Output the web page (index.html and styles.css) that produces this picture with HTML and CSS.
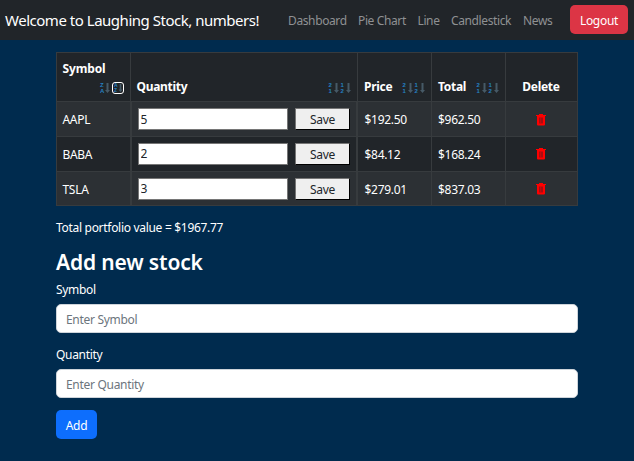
FILE: index.html
```html
<!DOCTYPE html>
<html lang="en">
<head>
<meta charset="utf-8">
<title>Laughing Stock</title>
<link rel="stylesheet" href="styles.css">
</head>
<body>
<header class="navbar">
  <span class="brand">Welcome to Laughing Stock, numbers!</span>
  <nav class="links"><a class="l1">Dashboard</a><a class="l2">Pie Chart</a><a class="l3">Line</a><a class="l4">Candlestick</a><a class="l5">News</a></nav>
  <button class="btn logout">Logout</button>
</header>
<main class="container">
  <table class="stocks">
    <colgroup><col class="c1"><col class="c2"><col class="c3"><col class="c4"><col class="c5"></colgroup>
    <thead><tr>
      <th><div class="head wrap"><span>Symbol</span><span class="sorts"><span class="sort"><span class="keys"><i>Z</i><i>A</i></span><svg viewBox="0 0 5 10"><path d="M1.500 0h2v7H5L2.500 10 0 7h1.500z"/></svg></span><span class="sort active"><span class="keys"><i>A</i><i>Z</i></span><svg viewBox="0 0 5 10"><path d="M1.500 0h2v7H5L2.500 10 0 7h1.500z"/></svg></span></span></div></th>
      <th><div class="head"><span>Quantity</span><span class="sorts"><span class="sort"><span class="keys"><i>2</i><i>1</i></span><svg viewBox="0 0 5 10"><path d="M1.500 0h2v7H5L2.500 10 0 7h1.500z"/></svg></span><span class="sort"><span class="keys"><i>1</i><i>2</i></span><svg viewBox="0 0 5 10"><path d="M1.500 0h2v7H5L2.500 10 0 7h1.500z"/></svg></span></span></div></th>
      <th class="num"><div class="head"><span>Price</span><span class="sorts"><span class="sort"><span class="keys"><i>2</i><i>1</i></span><svg viewBox="0 0 5 10"><path d="M1.500 0h2v7H5L2.500 10 0 7h1.500z"/></svg></span><span class="sort"><span class="keys"><i>1</i><i>2</i></span><svg viewBox="0 0 5 10"><path d="M1.500 0h2v7H5L2.500 10 0 7h1.500z"/></svg></span></span></div></th>
      <th class="num"><div class="head"><span>Total</span><span class="sorts"><span class="sort"><span class="keys"><i>2</i><i>1</i></span><svg viewBox="0 0 5 10"><path d="M1.500 0h2v7H5L2.500 10 0 7h1.500z"/></svg></span><span class="sort"><span class="keys"><i>1</i><i>2</i></span><svg viewBox="0 0 5 10"><path d="M1.500 0h2v7H5L2.500 10 0 7h1.500z"/></svg></span></span></div></th>
      <th><div class="head center"><span>Delete</span></div></th>
    </tr></thead>
    <tbody>
      <tr class="odd r1"><td>AAPL</td><td class="edit"><div class="qty"><input value="5"><button>Save</button></div></td><td class="num">$192.50</td><td class="num">$962.50</td><td><svg class="trash" viewBox="0 0 10 12"><path d="M0 1h3V0h4v1h3v1H9v8.500q0 1-1 1H2q-1 0-1-1V2H0z" fill="#f00"/><path d="M3 3.500h4v6H3z" fill="#a80c10"/><path d="M4.500 4v5.500" stroke="#d5080a" stroke-width=".6"/></svg></td></tr>
      <tr class="r2"><td>BABA</td><td class="edit"><div class="qty"><input value="2"><button>Save</button></div></td><td class="num">$84.12</td><td class="num">$168.24</td><td><svg class="trash" viewBox="0 0 10 12"><path d="M0 1h3V0h4v1h3v1H9v8.500q0 1-1 1H2q-1 0-1-1V2H0z" fill="#f00"/><path d="M3 3.500h4v6H3z" fill="#a80c10"/><path d="M4.500 4v5.500" stroke="#d5080a" stroke-width=".6"/></svg></td></tr>
      <tr class="odd r3"><td>TSLA</td><td class="edit"><div class="qty"><input value="3"><button>Save</button></div></td><td class="num">$279.01</td><td class="num">$837.03</td><td><svg class="trash" viewBox="0 0 10 12"><path d="M0 1h3V0h4v1h3v1H9v8.500q0 1-1 1H2q-1 0-1-1V2H0z" fill="#f00"/><path d="M3 3.500h4v6H3z" fill="#a80c10"/><path d="M4.500 4v5.500" stroke="#d5080a" stroke-width=".6"/></svg></td></tr>
    </tbody>
  </table>
  <p class="total">Total portfolio value = $1967.77</p>
  <h2>Add new stock</h2>
  <form>
    <label>Symbol</label>
    <input class="field" placeholder="Enter Symbol">
    <label>Quantity</label>
    <input class="field" placeholder="Enter Quantity">
    <button type="button" class="btn add">Add</button>
  </form>
</main>
</body>
</html>
```
FILE: styles.css
```css
* { box-sizing: border-box; }
body {
  margin: 0;
  height: 461px;
  overflow: hidden;
  background: #002b4e;
  color: #fff;
  font: 12px/19px "Noto Sans", "Open Sans", sans-serif;
  letter-spacing: -.3px;
}
input, button { font: inherit; letter-spacing: inherit; }
.navbar {
  display: flex;
  align-items: center;
  height: 40px;
  padding: 0 6px 0 5px;
  background: #212529;
}
.brand { width: 283px; font-size: 15px; letter-spacing: -.48px; white-space: nowrap; }
.links { display: flex; color: #8f9193; letter-spacing: -.38px; white-space: nowrap; }
.l1 { width: 70px; }
.l2 { width: 59.500px; }
.l3 { width: 33.500px; }
.l4 { width: 72px; }
.l5 { width: 30px; }
.btn {
  border: 0;
  border-radius: 5px;
  height: 29px;
  padding: 2px 0 0;
  color: #fff;
}
.logout { width: 58px; margin: 0 0 1px auto; background: #dc3545; }
.container { width: 522px; margin: 12px 0 0 56px; }
.stocks {
  width: 521px;
  table-layout: fixed;
  border-collapse: collapse;
  background: #212529;
}
.c1 { width: 74px; }
.c2 { width: 226.500px; }
.c3, .c4 { width: 74px; }
.c5 { width: 72.500px; }
th, td { border: 1px solid #373b3e; padding: 0 6px 0 5.500px; text-align: left; }
thead tr { height: 49px; }
tbody tr { height: 34.700px; }
.r1 { height: 35px; }
.odd { background: #2c3034; }
td { padding-top: 1px; }
td.edit { border-left-width: 2px; border-right-width: 2px; padding: 0 6px; }
.num { padding-left: 6.500px; }
.head { display: flex; justify-content: space-between; align-items: flex-end; height: 37px; font-weight: 700; }
.head.wrap { flex-direction: column; align-items: flex-start; letter-spacing: -.15px; }
.wrap .sorts { align-self: flex-end; }
.head.center { justify-content: center; }
.sorts { display: flex; align-items: center; gap: 2px; height: 15px; }
.sort { display: flex; align-items: center; gap: 1px; width: 10px; height: 12px; }
.keys { width: 4px; font: bold 6px/6px "Liberation Sans", sans-serif; letter-spacing: 0; color: #2581c4; }
.keys i { display: block; font-style: normal; }
.sort svg { width: 5px; height: 10px; fill: #465a67; }
.sort.active { width: 12px; padding-left: 1px; gap: 0; border: 1px solid #fff; border-radius: 3px; }
.active .keys { font-size: 5px; line-height: 5px; }
.active svg { height: 8px; }
.qty { display: flex; justify-content: space-between; }
.qty input {
  width: 150px;
  height: 22px;
  padding: 1px 2px;
  border: 1px solid #767676;
  background: #fff;
  color: #212529;
}
.qty button {
  width: 55px;
  height: 22px;
  padding: 1px 0 0;
  border: 1px solid #000;
  border-top-color: #767676;
  border-left-color: #767676;
  background: #efefef;
  color: #212529;
}
.trash { display: block; width: 10px; height: 12px; margin: 0 auto; }
.total { margin: 12px 0 0; }
h2 { margin: 12px 0 4px; font-size: 21px; line-height: 27px; font-weight: 600; letter-spacing: -.15px; }
label { display: block; height: 19px; margin-bottom: 5px; }
.field {
  display: block;
  width: 100%;
  height: 29px;
  margin-bottom: 12px;
  padding: 2px 9px 0;
  border: 1px solid #ced4da;
  border-radius: 5px;
  background: #fff;
}
.field::placeholder { color: #6c757d; }
.add { display: block; width: 41px; background: #0d6efd; }
```
